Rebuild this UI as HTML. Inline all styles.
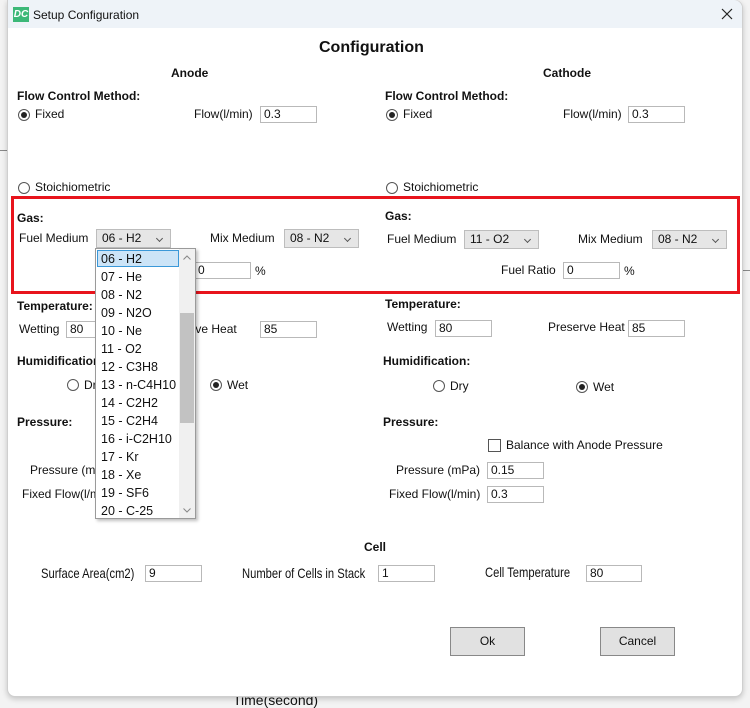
<!DOCTYPE html>
<html><head><meta charset="utf-8"><style>
*{box-sizing:border-box;margin:0;padding:0}
body{width:750px;height:704px;position:relative;overflow:hidden;background:#f3f3f3;font-family:"Liberation Sans",sans-serif;font-size:12px;color:#111}
.a{position:absolute;line-height:16px;white-space:nowrap}
.b{font-weight:bold}
.in{position:absolute;height:17px;border:1px solid #b9b9b9;background:#fff;padding-left:3px;line-height:15px;font-size:12px}
.cb{position:absolute;height:19px;border:1px solid #bdbdbd;background:#e6e6e6;padding-left:5px;line-height:17px}
.cb:after{content:"";position:absolute;right:8px;top:6px;width:4px;height:4px;border-right:1px solid #555;border-bottom:1px solid #555;transform:rotate(45deg)}
.r{position:absolute;width:12px;height:12px;border:1px solid #555;border-radius:50%;background:#fff}
.r.on:after{content:"";position:absolute;left:2px;top:2px;width:6px;height:6px;border-radius:50%;background:#222}
.btn{position:absolute;height:29px;border:1px solid #888;background:#e1e1e1;text-align:center;line-height:27px}
.n{transform:scaleX(0.8);transform-origin:left center;font-size:14px}
</style></head><body>
<div style="position:absolute;left:0;top:150px;width:8px;height:1px;background:#888"></div>
<div style="position:absolute;left:742px;top:270px;width:8px;height:1px;background:#888"></div>
<div class="a" style="left:233px;top:692px;font-size:14px">Time(second)</div>
<div style="position:absolute;left:7px;top:0;width:736px;height:697px;background:#fff;border:1px solid #cfcfcf;border-radius:0 8px 8px 8px;box-shadow:0 2px 6px rgba(0,0,0,.2)">
</div>
<div style="position:absolute;left:8px;top:0;width:734px;height:28px;background:#eef3f8;border-radius:0 8px 0 0"></div>
<div style="position:absolute;left:13px;top:7px;width:16px;height:15px;background:#3cb878;color:#fff;font-size:10px;font-weight:bold;font-style:italic;line-height:15px;text-align:center">DC</div>
<div class="a" style="left:33px;top:7px">Setup Configuration</div>
<svg style="position:absolute;left:721px;top:8px" width="12" height="12"><path d="M1 1L11 11M11 1L1 11" stroke="#222" stroke-width="1.2"/></svg>

<div class="a b" style="left:319px;top:38px;font-size:16px;line-height:20px">Configuration</div>
<div class="a b" style="left:171px;top:65px">Anode</div>
<div class="a b" style="left:543px;top:65px">Cathode</div>

<div class="a b" style="left:17px;top:88px">Flow Control Method:</div>
<div class="r on" style="left:18px;top:109px"></div><div class="a" style="left:35px;top:106px">Fixed</div>
<div class="a" style="left:194px;top:106px">Flow(l/min)</div><div class="in" style="left:260px;top:106px;width:57px">0.3</div>
<div class="r" style="left:18px;top:182px"></div><div class="a" style="left:35px;top:179px">Stoichiometric</div>
<div class="a b" style="left:17px;top:210px">Gas:</div>
<div class="a" style="left:19px;top:230px">Fuel Medium</div><div class="cb" style="left:96px;top:229px;width:75px">06 - H2</div>
<div class="a" style="left:210px;top:230px">Mix Medium</div><div class="cb" style="left:284px;top:229px;width:75px">08 - N2</div>
<div class="in" style="left:194px;top:262px;width:57px">0</div><div class="a" style="left:255px;top:263px">%</div>
<div class="a b" style="left:17px;top:298px">Temperature:</div>
<div class="a" style="left:19px;top:321px">Wetting</div><div class="in" style="left:66px;top:321px;width:57px">80</div>
<div class="a" style="left:160px;top:321px">Preserve Heat</div><div class="in" style="left:260px;top:321px;width:57px">85</div>
<div class="a b" style="left:17px;top:353px">Humidification:</div>
<div class="r" style="left:67px;top:379px"></div><div class="a" style="left:84px;top:377px">Dry</div>
<div class="r on" style="left:210px;top:379px"></div><div class="a" style="left:227px;top:377px">Wet</div>
<div class="a b" style="left:17px;top:414px">Pressure:</div>
<div class="a" style="left:30px;top:462px">Pressure (mPa)</div>
<div class="a" style="left:22px;top:486px">Fixed Flow(l/min)</div>

<div class="a b" style="left:385px;top:88px">Flow Control Method:</div>
<div class="r on" style="left:386px;top:109px"></div><div class="a" style="left:403px;top:106px">Fixed</div>
<div class="a" style="left:563px;top:106px">Flow(l/min)</div><div class="in" style="left:628px;top:106px;width:57px">0.3</div>
<div class="r" style="left:386px;top:182px"></div><div class="a" style="left:403px;top:179px">Stoichiometric</div>
<div class="a b" style="left:385px;top:208px">Gas:</div>
<div class="a" style="left:387px;top:231px">Fuel Medium</div><div class="cb" style="left:464px;top:230px;width:75px">11 - O2</div>
<div class="a" style="left:578px;top:231px">Mix Medium</div><div class="cb" style="left:652px;top:230px;width:75px">08 - N2</div>
<div class="a" style="left:501px;top:262px">Fuel Ratio</div><div class="in" style="left:563px;top:262px;width:57px">0</div><div class="a" style="left:624px;top:263px">%</div>
<div class="a b" style="left:385px;top:296px">Temperature:</div>
<div class="a" style="left:387px;top:319px">Wetting</div><div class="in" style="left:435px;top:320px;width:57px">80</div>
<div class="a" style="left:548px;top:319px">Preserve Heat</div><div class="in" style="left:628px;top:320px;width:57px">85</div>
<div class="a b" style="left:383px;top:353px">Humidification:</div>
<div class="r" style="left:433px;top:380px"></div><div class="a" style="left:450px;top:378px">Dry</div>
<div class="r on" style="left:576px;top:381px"></div><div class="a" style="left:593px;top:379px">Wet</div>
<div class="a b" style="left:383px;top:414px">Pressure:</div>
<div style="position:absolute;left:488px;top:439px;width:13px;height:13px;border:1px solid #555;background:#fff"></div>
<div class="a" style="left:506px;top:437px">Balance with Anode Pressure</div>
<div class="a" style="left:396px;top:462px">Pressure (mPa)</div><div class="in" style="left:487px;top:462px;width:57px">0.15</div>
<div class="a" style="left:389px;top:486px">Fixed Flow(l/min)</div><div class="in" style="left:487px;top:486px;width:57px">0.3</div>

<div style="position:absolute;left:11px;top:196px;width:729px;height:98px;border:3px solid #e8141c"></div>

<div class="a b" style="left:364px;top:539px">Cell</div>
<div class="a n" style="left:41px;top:565px">Surface Area(cm2)</div><div class="in" style="left:145px;top:565px;width:57px">9</div>
<div class="a n" style="left:242px;top:565px">Number of Cells in Stack</div><div class="in" style="left:378px;top:565px;width:57px">1</div>
<div class="a n" style="left:485px;top:564px">Cell Temperature</div><div class="in" style="left:586px;top:565px;width:56px">80</div>
<div class="btn" style="left:450px;top:627px;width:75px">Ok</div>
<div class="btn" style="left:600px;top:627px;width:75px">Cancel</div>

<div style="position:absolute;left:95px;top:248px;width:101px;height:271px;background:#fff;border:1px solid #9a9a9a;box-shadow:2px 2px 3px rgba(0,0,0,.25)">
<div style="position:absolute;left:1px;top:1px;width:82px;height:17px;background:#cce4f7;border:1px solid #3b98d8"></div>
<div style="position:absolute;left:83px;top:0;width:16px;height:269px;background:#f0f0f0"></div>
<div style="position:absolute;left:84px;top:64px;width:14px;height:110px;background:#c2c2c2"></div>
<svg style="position:absolute;left:87px;top:6px" width="8" height="5"><path d="M0.5 4.5L4 1L7.5 4.5" fill="none" stroke="#888"/></svg>
<svg style="position:absolute;left:87px;top:259px" width="8" height="5"><path d="M0.5 0.5L4 4L7.5 0.5" fill="none" stroke="#888"/></svg>
<div style="position:absolute;left:5px;top:1px;line-height:18px;font-size:12.5px">06 - H2<br>07 - He<br>08 - N2<br>09 - N2O<br>10 - Ne<br>11 - O2<br>12 - C3H8<br>13 - n-C4H10<br>14 - C2H2<br>15 - C2H4<br>16 - i-C2H10<br>17 - Kr<br>18 - Xe<br>19 - SF6<br>20 - C-25</div>
</div>
</body></html>
